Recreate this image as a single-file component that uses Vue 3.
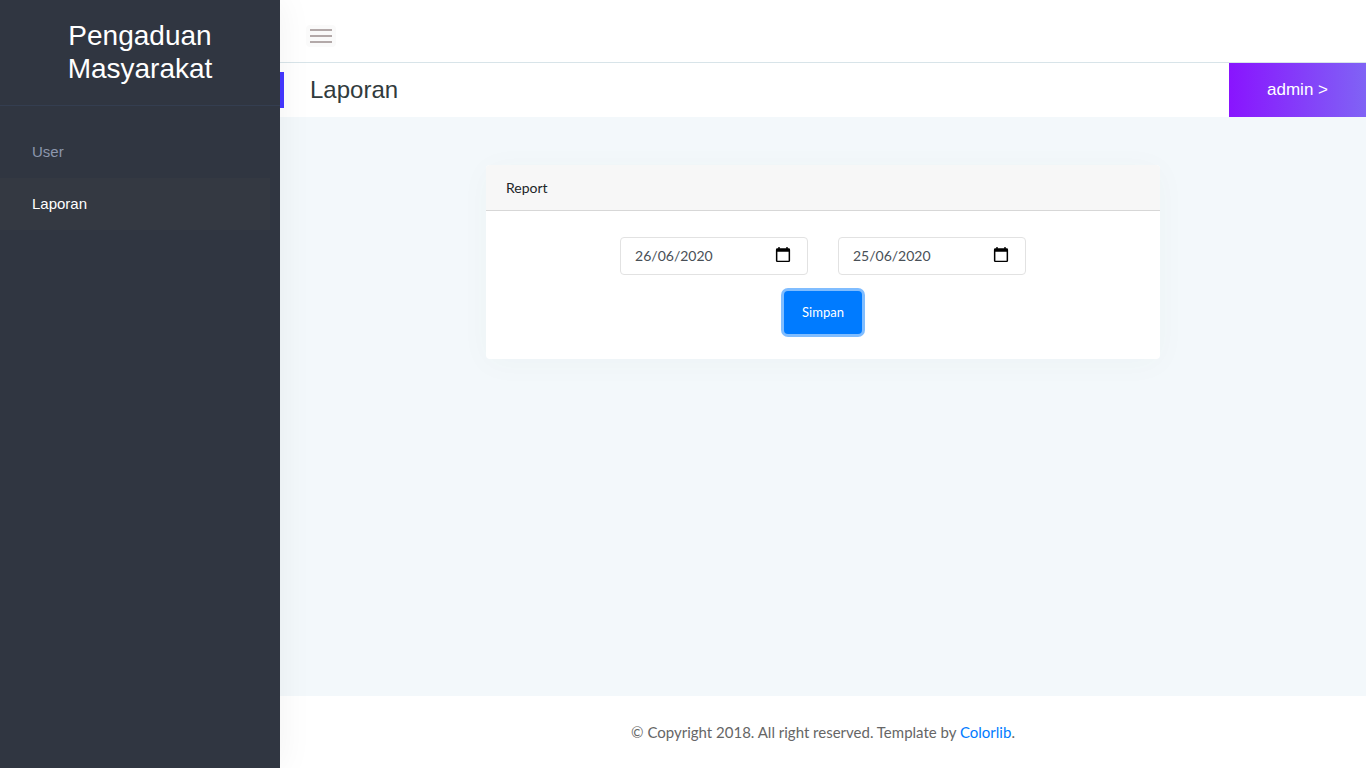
<script setup>
import { ref } from 'vue'

const menu = [
  { label: 'User', active: false },
  { label: 'Laporan', active: true },
]
const dates = ref([
  { id: 'from', label: 'Dari tanggal', value: '26/06/2020' },
  { id: 'to', label: 'Sampai tanggal', value: '25/06/2020' },
])
</script>

<template>
  <div class="page">
    <aside class="sidebar">
      <div class="brand"><h3>Pengaduan Masyarakat</h3></div>
      <nav class="menu">
        <a v-for="m in menu" :key="m.label" href="#" :class="{ active: m.active }">{{ m.label }}</a>
      </nav>
    </aside>

    <div class="main">
      <header class="topbar">
        <button class="burger" type="button" aria-label="Menu">
          <span></span><span></span><span></span>
        </button>
      </header>

      <div class="titlebar">
        <h4>Laporan</h4>
        <button class="profile" type="button">admin &gt;</button>
      </div>

      <main class="content">
        <section class="card">
          <div class="card-header">Report</div>
          <form class="card-body" @submit.prevent>
            <div class="fields">
              <div v-for="d in dates" :key="d.id" class="field">
                <input :id="d.id" v-model="d.value" type="text" :aria-label="d.label" />
                <svg width="16" height="16" viewBox="0 0 16 16" aria-hidden="true">
                  <path
                    fill="#000"
                    fill-rule="evenodd"
                    d="M3.300 0h1.400v1.300h6.600V0h1.400v1.300h1a1.400 1.400 0 0 1 1.400 1.400v11a1.400 1.400 0 0 1-1.400 1.400H2.300a1.400 1.400 0 0 1-1.400-1.400v-11a1.400 1.400 0 0 1 1.400-1.400h1zM2.400 4.700v9h11.200v-9z"
                  />
                </svg>
              </div>
            </div>
            <button class="save" type="submit">Simpan</button>
          </form>
        </section>
      </main>

      <footer class="footer">
        <p>© Copyright 2018. All right reserved. Template by <a href="#">Colorlib</a>.</p>
      </footer>
    </div>
  </div>
</template>

<style>
body {
  margin: 0;
}
</style>

<style scoped>
* {
  box-sizing: border-box;
}
.page {
  display: flex;
  min-height: 100vh;
  background: #f3f8fb;
  font-family: Lato, sans-serif;
  font-size: 14px;
}
h3,
h4,
p {
  margin: 0;
  font-weight: 400;
}
.sidebar {
  position: relative;
  z-index: 1;
  flex: 0 0 280px;
  background: #303641;
  box-shadow: 2px 0 32px rgba(0, 0, 0, 0.05);
  font-family: "Liberation Sans", Arial, sans-serif;
}
.brand {
  padding: 19px 32px 20px;
  border-bottom: 1px solid #343e50;
  text-align: center;
}
.brand h3 {
  padding: 0 20px;
  color: #fff;
  font-size: 28px;
  line-height: 33px;
}
.menu {
  display: flex;
  flex-direction: column;
  padding: 20px 10px 0 0;
}
.menu a {
  padding: 0 32px;
  color: #8d97ad;
  font-size: 15px;
  line-height: 52px;
  text-decoration: none;
}
.menu a.active {
  background: #343942;
  color: #fff;
}
.main {
  display: flex;
  flex: 1;
  flex-direction: column;
  min-width: 0;
}
.topbar {
  display: flex;
  align-items: center;
  height: 63px;
  padding: 10px 26px 0;
  border-bottom: 1px solid #d8e4e9;
  background: #fff;
}
.burger {
  display: flex;
  flex-direction: column;
  gap: 4px;
  width: 30px;
  padding: 4px;
  border: 0;
  border-radius: 4px;
  background: #fafafa;
}
.burger span {
  height: 2px;
  background: #b3a9a9;
}
.titlebar {
  display: flex;
  align-items: center;
  justify-content: space-between;
  background: #fff;
}
.titlebar h4 {
  position: relative;
  z-index: 2;
  padding-left: 30px;
  color: #313b3d;
  font-family: "Liberation Sans", Arial, sans-serif;
  font-size: 24px;
  line-height: 36px;
}
.titlebar h4::before {
  content: "";
  position: absolute;
  top: 0;
  bottom: 0;
  left: 0;
  width: 4px;
  background: #4336fb;
}
.profile {
  height: 54px;
  padding: 0 38px;
  border: 0;
  background: linear-gradient(to right, #8914fe, #8063f5);
  color: #fff;
  font-family: "Liberation Sans", Arial, sans-serif;
  font-size: 17px;
}
.content {
  flex: 1;
  padding: 48px 30px;
}
.card {
  width: calc((100% + 30px) * 2 / 3 - 30px);
  margin: 0 auto;
  border-radius: 4px;
  background: #fff;
  box-shadow: 0 4px 32px rgba(19, 80, 60, 0.03);
}
.card-header {
  padding: 12px 20px;
  border-bottom: 1px solid #d7d7d7;
  border-radius: 4px 4px 0 0;
  background: #f7f7f7;
  color: #212529;
  line-height: 21px;
}
.card-body {
  display: flex;
  flex-direction: column;
  align-items: center;
  gap: 16px;
  padding: 26px 20px 25px;
}
.fields {
  display: flex;
  gap: 30px;
  width: 64%;
}
.field {
  position: relative;
  flex: 1;
}
.field input {
  display: block;
  width: 100%;
  height: 38px;
  padding: 0 40px 2px 14px;
  border: 1px solid #e2e2e2;
  border-radius: 4px;
  background: #fff;
  color: #495057;
  font-family: Lato, sans-serif;
  font-size: 14px;
}
.field svg {
  position: absolute;
  top: 10px;
  right: 17px;
}
.save {
  padding: 0 18px;
  border: 0;
  border-radius: 4px;
  background: #007bff;
  box-shadow: 0 0 0 3px #80bdff;
  color: #fff;
  font-family: Lato, sans-serif;
  font-size: 13px;
  line-height: 43px;
}
.footer {
  padding: 24px;
  background: #fff;
  color: #666;
  font-size: 15px;
  line-height: 24px;
  text-align: center;
}
.footer a {
  color: #007bff;
  text-decoration: none;
}
</style>
